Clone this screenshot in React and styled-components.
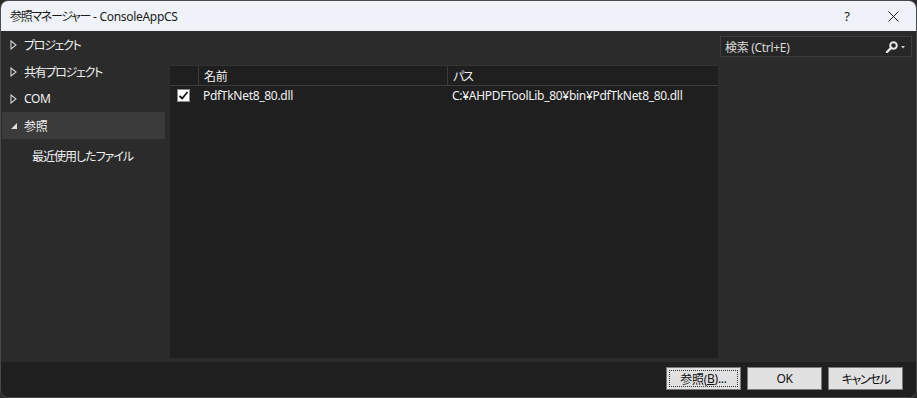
import styled, { createGlobalStyle } from "styled-components";

const GlobalStyle = createGlobalStyle`
  html, body {
    margin: 0;
    padding: 0;
    background: #2b2b2b;
  }
  * {
    box-sizing: border-box;
  }
`;

const Window = styled.div`
  width: 917px;
  height: 398px;
  display: flex;
  flex-direction: column;
  border: 1px solid #4a4a4a;
  border-radius: 8px;
  overflow: hidden;
  background: #2b2b2b;
  font-family: "Noto Sans", "Noto Sans CJK JP", sans-serif;
  font-size: 12px;
  font-feature-settings: "palt";
  letter-spacing: -0.3px;
  color: #f1f1f1;
`;

// Japanese runs: Yu Gothic UI kana are narrower than Noto's
const Ja = styled.span`
  letter-spacing: ${(p) => p.$ls ?? -1.3}px;
`;

const TitleBar = styled.div`
  height: 30px;
  flex: none;
  display: flex;
  align-items: center;
  background: #eff3f9;
  color: #1a1a1a;
  padding-left: 9px;
`;

const Title = styled.div`
  flex: 1;
`;

const TitleButton = styled.div`
  width: 46px;
  height: 30px;
  display: flex;
  align-items: center;
  justify-content: center;
  font-size: 13px;
  color: #1a1a1a;
`;

const Body = styled.div`
  flex: 1;
  display: grid;
  grid-template-columns: 164px 1fr;
`;

const Tree = styled.div`
  padding-left: 1px;
  display: flex;
  flex-direction: column;
`;

const TreeItem = styled.div`
  height: 27px;
  display: flex;
  align-items: center;
  padding-left: ${(p) => (p.$child ? 30 : 8)}px;
  margin-top: ${(p) => (p.$child ? 3 : 0)}px;
  gap: 7px;
  background: ${(p) => (p.$selected ? "#3b3b3b" : "transparent")};
`;

const Main = styled.div`
  display: grid;
  grid-template-columns: 548px 1fr;
  grid-template-rows: 34px 1fr;
  padding-left: 5px;
  padding-bottom: 4px;
`;

const SearchCell = styled.div`
  grid-column: 2;
  grid-row: 1;
  padding: 5px 4px 0 2px;
`;

const SearchBox = styled.div`
  height: 21px;
  display: flex;
  align-items: center;
  border: 1px solid #3d3d3d;
  background: #262626;
  padding: 0 4px 0 4px;
  color: #d8d8d8;
`;

const SearchText = styled.div`
  flex: 1;
`;

const List = styled.div`
  grid-column: 1;
  grid-row: 2;
  background: #1f1f1f;
  display: flex;
  flex-direction: column;
`;

const Row = styled.div`
  display: grid;
  grid-template-columns: 28px 249px 1fr;
  height: ${(p) => (p.$header ? 21 : 18)}px;
  align-items: center;
  border-top: ${(p) => (p.$header ? "1px solid #333" : "none")};
  border-bottom: ${(p) => (p.$header ? "1px solid #3c3c3c" : "none")};
`;

const Cell = styled.div`
  height: 100%;
  display: flex;
  align-items: center;
  padding-left: ${(p) => (p.$check ? 7 : 5)}px;
  border-left: ${(p) => (p.$sep ? "1px solid #3c3c3c" : "none")};
  white-space: nowrap;
`;

const Checkbox = styled.div`
  width: 13px;
  height: 13px;
  background: #ffffff;
  border: 1px solid #8a8a8a;
  display: flex;
  align-items: center;
  justify-content: center;
`;

const Footer = styled.div`
  height: 35px;
  flex: none;
  background: #1f1f1f;
  display: flex;
  justify-content: flex-end;
  align-items: flex-start;
  padding: 5px 13px 0 0;
  gap: 6px;
`;

const Button = styled.button`
  width: 75px;
  height: 23px;
  background: #e1e1e1;
  border: 1px solid #7a7a7a;
  color: #111;
  font-family: inherit;
  font-size: 12px;
  font-feature-settings: "palt";
  letter-spacing: -0.3px;
  padding: 0;
  position: relative;
  display: flex;
  align-items: center;
  justify-content: center;

  &::after {
    content: "";
    display: ${(p) => (p.$focused ? "block" : "none")};
    position: absolute;
    inset: 2px;
    border: 1px dotted #333;
  }
`;

const Collapsed = () => (
  <svg width="7" height="10" viewBox="0 0 7 10">
    <path d="M1 1 L6 5 L1 9 Z" fill="none" stroke="#d0d0d0" strokeWidth="1.1" />
  </svg>
);

const Expanded = () => (
  <svg width="7" height="10" viewBox="0 0 7 10">
    <path d="M7 2 L7 8 L1 8 Z" fill="#e0e0e0" />
  </svg>
);

const SearchIcon = () => (
  <svg width="22" height="12" viewBox="0 0 22 12">
    <circle cx="8.5" cy="4.5" r="3.3" fill="none" stroke="#e6e6e6" strokeWidth="2" />
    <path d="M6.3 6.7 L2 11" stroke="#e6e6e6" strokeWidth="2.4" strokeLinecap="round" />
    <path d="M16 5 L20 5 L18 7.5 Z" fill="#cfcfcf" />
  </svg>
);

const CloseIcon = () => (
  <svg width="11" height="11" viewBox="0 0 11 11">
    <path d="M0.5 0.5 L10.5 10.5 M10.5 0.5 L0.5 10.5" stroke="#1a1a1a" strokeWidth="1" />
  </svg>
);

const CheckMark = () => (
  <svg width="11" height="11" viewBox="0 0 11 11">
    <path d="M1.5 5.8 L4.2 8.5 L9.5 2" fill="none" stroke="#111" strokeWidth="1.8" />
  </svg>
);

const App = () => {
  return (
    <>
      <GlobalStyle />
      <Window>
        <TitleBar>
          <Title>
            <Ja>参照マネージャー</Ja> - ConsoleAppCS
          </Title>
          <TitleButton>?</TitleButton>
          <TitleButton>
            <CloseIcon />
          </TitleButton>
        </TitleBar>
        <Body>
          <Tree>
            <TreeItem>
              <Collapsed />
              <Ja>プロジェクト</Ja>
            </TreeItem>
            <TreeItem>
              <Collapsed />
              <Ja>共有プロジェクト</Ja>
            </TreeItem>
            <TreeItem>
              <Collapsed />
              COM
            </TreeItem>
            <TreeItem $selected>
              <Expanded />
              <Ja $ls={-0.3}>参照</Ja>
            </TreeItem>
            <TreeItem $child>
              <Ja $ls={-1}>最近使用したファイル</Ja>
            </TreeItem>
          </Tree>
          <Main>
            <SearchCell>
              <SearchBox>
                <SearchText>検索 (Ctrl+E)</SearchText>
                <SearchIcon />
              </SearchBox>
            </SearchCell>
            <List>
              <Row $header>
                <Cell />
                <Cell $sep>名前</Cell>
                <Cell $sep>
                  <Ja>パス</Ja>
                </Cell>
              </Row>
              <Row>
                <Cell $check>
                  <Checkbox>
                    <CheckMark />
                  </Checkbox>
                </Cell>
                <Cell>PdfTkNet8_80.dll</Cell>
                <Cell>C:¥AHPDFToolLib_80¥bin¥PdfTkNet8_80.dll</Cell>
              </Row>
            </List>
          </Main>
        </Body>
        <Footer>
          <Button $focused>
            参照(<u>B</u>)...
          </Button>
          <Button>OK</Button>
          <Button>
            <Ja>キャンセル</Ja>
          </Button>
        </Footer>
      </Window>
    </>
  );
};

export default App;
